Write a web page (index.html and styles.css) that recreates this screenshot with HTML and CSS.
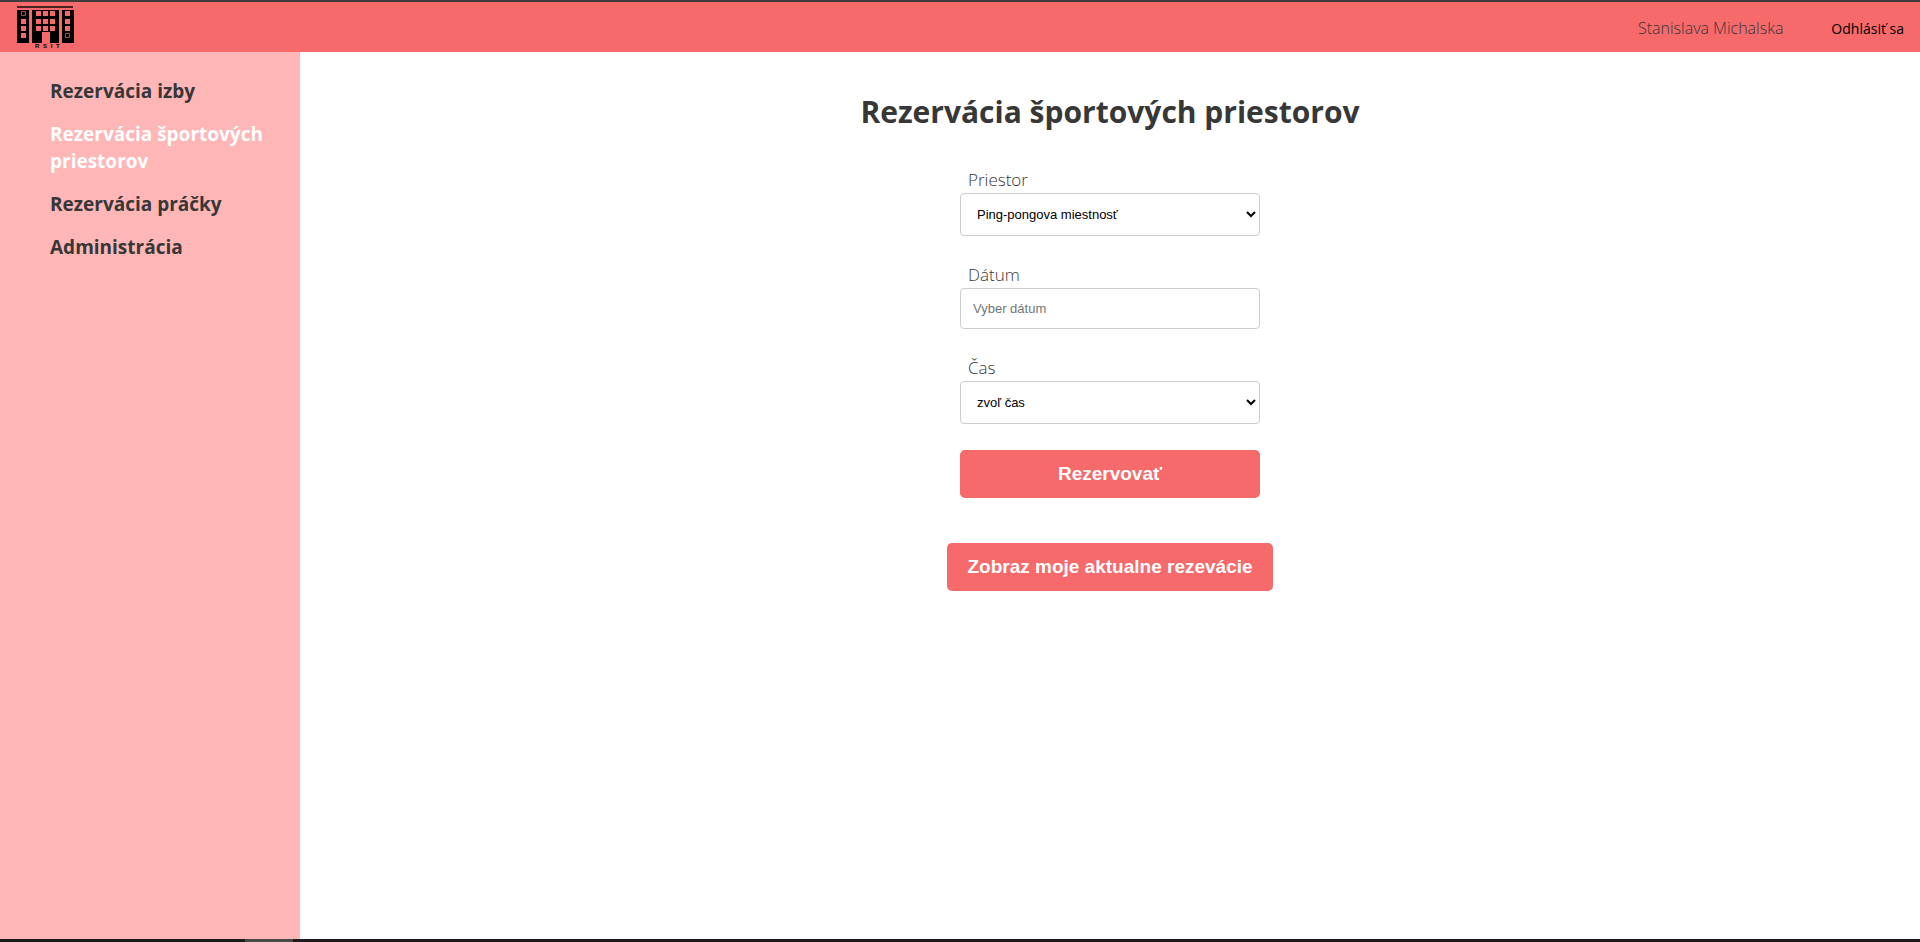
FILE: index.html
```html
<!DOCTYPE html>
<html lang="sk">
<head>
  <meta charset="UTF-8" />
  <meta name="viewport" content="width=device-width, initial-scale=1.0"/>
  <title>Rezervácia športových priestorov</title>
  <link rel="stylesheet" href="styles.css">
</head>
<body>

<header class="header">
  <a class="logo" href="#" aria-label="RSIT">
    <svg width="58" height="48" viewBox="0 0 58 48">
      <rect x="1" y="3" width="56" height="2" fill="#4a2222"/>
      <path fill="#000" d="M1 7h12v33H1zM16 7h27v33h-9V29h-8v11H16zM46 7h12v33H46z"/>
      <path fill="#f66a6b" d="M20 8h5v5h-5zM27 8h5v5h-5zM34 8h5v5h-5zM20 16h5v5h-5zM27 16h5v5h-5zM34 16h5v5h-5zM20 23h5v5h-5zM27 23h5v5h-5zM34 23h5v5h-5zM5 16h5v5H5zM5 23h5v5H5zM5 30h5v5H5zM49 8h5v5h-5zM49 16h5v5h-5zM49 23h5v5h-5z"/>
      <path fill="none" stroke="#b04a4b" d="M5.500 8.500h4v4h-4zM49.500 30.500h4v4h-4z"/>
      <text class="logo-text" x="19" y="45">R S I T</text>
    </svg>
  </a>
  <div class="user">
    <span class="user-name">Stanislava Michalska</span>
    <button class="logout">Odhlásiť sa</button>
  </div>
</header>

<div class="page">
  <nav class="sidebar">
    <a href="#">Rezervácia izby</a>
    <a href="#" class="active">Rezervácia športových priestorov</a>
    <a href="#">Rezervácia práčky</a>
    <a href="#">Administrácia</a>
  </nav>

  <main class="content">
    <h1>Rezervácia športových priestorov</h1>

    <form class="form">
      <div class="field">
        <label for="room">Priestor</label>
        <select id="room">
          <option>Ping-pongova miestnosť</option>
        </select>
      </div>
      <div class="field">
        <label for="date">Dátum</label>
        <input type="text" id="date" placeholder="Vyber dátum">
      </div>
      <div class="field">
        <label for="time">Čas</label>
        <select id="time">
          <option>zvoľ čas</option>
        </select>
      </div>
      <button type="submit" class="btn">Rezervovať</button>
    </form>

    <button class="btn">Zobraz moje aktualne rezevácie</button>
  </main>
</div>

<footer class="taskbar">
  <div class="taskbar-item"></div>
</footer>

</body>
</html>
```

FILE: styles.css
```css
* {
  box-sizing: border-box;
}

body {
  margin: 0;
  min-height: 100vh;
  display: flex;
  flex-direction: column;
  font-family: 'Segoe UI', 'Open Sans', sans-serif;
  color: #373737;
  background: #fff;
}

.header {
  display: flex;
  justify-content: space-between;
  align-items: center;
  height: 52px;
  padding: 0 16px;
  border-top: 2px solid #403c3e;
  background: #f66a6b;
}

.logo {
  display: flex;
}

.logo-text {
  font: bold 6px 'Liberation Sans', sans-serif;
  word-spacing: 2px;
}

.user {
  display: flex;
  align-items: center;
  gap: 48px;
  padding-top: 2px;
}

.user-name {
  font-size: 16px;
  font-weight: 300;
}

.logout {
  padding: 0;
  border: none;
  background: none;
  font-family: inherit;
  font-size: 14px;
  color: #000;
  cursor: pointer;
}

.page {
  flex: 1;
  display: flex;
}

.sidebar {
  width: 300px;
  padding: 26px 32px 26px 50px;
  display: flex;
  flex-direction: column;
  gap: 16px;
  background: #ffb6b7;
}

.sidebar a {
  font-size: 19px;
  font-weight: bold;
  line-height: 27px;
  color: #373737;
  text-decoration: none;
}

.sidebar .active {
  color: #fff;
}

.content {
  flex: 1;
  display: flex;
  flex-direction: column;
  align-items: center;
  padding-top: 36px;
}

h1 {
  margin: 0 0 31px;
  font-size: 30px;
  font-weight: bold;
  line-height: 48px;
}

.form {
  display: flex;
  flex-direction: column;
  gap: 26px;
  width: 300px;
  margin-bottom: 45px;
}

.field {
  display: flex;
  flex-direction: column;
}

.field label {
  padding-left: 8px;
  font-size: 17px;
  font-weight: 300;
  line-height: 26px;
}

.field select,
.field input {
  width: 100%;
  padding: 12px;
  border: 1px solid #ccc;
  border-radius: 4px;
  background: #fff;
  font-family: Arial, 'Liberation Sans', sans-serif;
  font-size: 13px;
  color: #000;
}

.field select {
  height: 43px;
}

.field input {
  height: 41px;
}

.btn {
  height: 48px;
  padding: 0 20px;
  border: none;
  border-radius: 5px;
  background: #f66a6b;
  font-family: Arial, 'Liberation Sans', sans-serif;
  font-size: 19px;
  font-weight: bold;
  color: #fff;
  cursor: pointer;
}

.taskbar {
  height: 3px;
  padding-left: 245px;
  background: #1c1a1b;
}

.taskbar-item {
  width: 48px;
  height: 3px;
  background: #4a4848;
}
```
